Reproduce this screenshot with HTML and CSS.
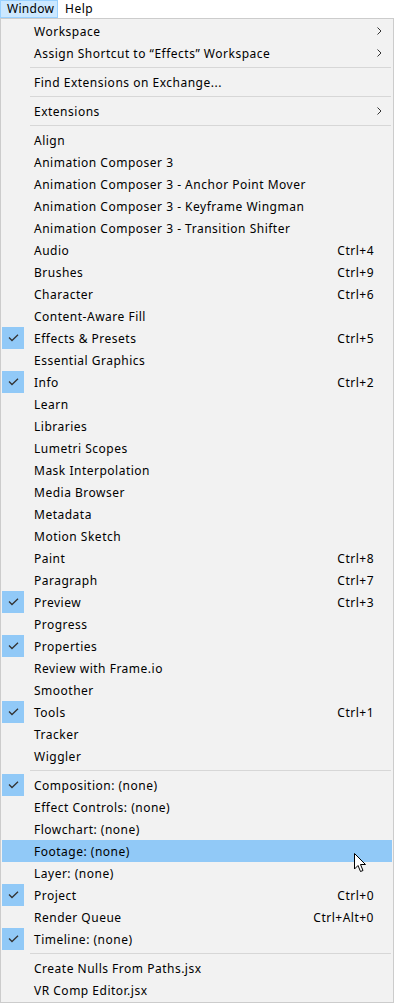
FILE: index.html
```html
<!DOCTYPE html>
<html>
<head>
<meta charset="utf-8">
<link rel="stylesheet" href="styles.css">
</head>
<body>
<div class="menubar">
  <div class="mb-item active">Window</div>
  <div class="mb-item">Help</div>
</div>
<div class="menu">
  <div class="row"><span class="label">Workspace</span><span class="sub"><svg width="5" height="8" viewBox="0 0 5 8"><path d="M0.5 0.5 L4 4 L0.5 7.5" fill="none" stroke="#333" stroke-width="1"/></svg></span></div>
  <div class="row"><span class="label">Assign Shortcut to “Effects” Workspace</span><span class="sub"><svg width="5" height="8" viewBox="0 0 5 8"><path d="M0.5 0.5 L4 4 L0.5 7.5" fill="none" stroke="#333" stroke-width="1"/></svg></span></div>
  <div class="sep"></div>
  <div class="row"><span class="label">Find Extensions on Exchange...</span></div>
  <div class="sep"></div>
  <div class="row"><span class="label">Extensions</span><span class="sub"><svg width="5" height="8" viewBox="0 0 5 8"><path d="M0.5 0.5 L4 4 L0.5 7.5" fill="none" stroke="#333" stroke-width="1"/></svg></span></div>
  <div class="sep"></div>
  <div class="row"><span class="label">Align</span></div>
  <div class="row"><span class="label">Animation Composer 3</span></div>
  <div class="row"><span class="label">Animation Composer 3 - Anchor Point Mover</span></div>
  <div class="row"><span class="label">Animation Composer 3 - Keyframe Wingman</span></div>
  <div class="row"><span class="label">Animation Composer 3 - Transition Shifter</span></div>
  <div class="row"><span class="label">Audio</span><span class="key">Ctrl+4</span></div>
  <div class="row"><span class="label">Brushes</span><span class="key">Ctrl+9</span></div>
  <div class="row"><span class="label">Character</span><span class="key">Ctrl+6</span></div>
  <div class="row"><span class="label">Content-Aware Fill</span></div>
  <div class="row checked"><span class="check"><svg width="11" height="8" viewBox="0 0 11 8"><path d="M1 3.5 L4 6.5 L10 0.8" fill="none" stroke="#333" stroke-width="1.3"/></svg></span><span class="label">Effects &amp; Presets</span><span class="key">Ctrl+5</span></div>
  <div class="row"><span class="label">Essential Graphics</span></div>
  <div class="row checked"><span class="check"><svg width="11" height="8" viewBox="0 0 11 8"><path d="M1 3.5 L4 6.5 L10 0.8" fill="none" stroke="#333" stroke-width="1.3"/></svg></span><span class="label">Info</span><span class="key">Ctrl+2</span></div>
  <div class="row"><span class="label">Learn</span></div>
  <div class="row"><span class="label">Libraries</span></div>
  <div class="row"><span class="label">Lumetri Scopes</span></div>
  <div class="row"><span class="label">Mask Interpolation</span></div>
  <div class="row"><span class="label">Media Browser</span></div>
  <div class="row"><span class="label">Metadata</span></div>
  <div class="row"><span class="label">Motion Sketch</span></div>
  <div class="row"><span class="label">Paint</span><span class="key">Ctrl+8</span></div>
  <div class="row"><span class="label">Paragraph</span><span class="key">Ctrl+7</span></div>
  <div class="row checked"><span class="check"><svg width="11" height="8" viewBox="0 0 11 8"><path d="M1 3.5 L4 6.5 L10 0.8" fill="none" stroke="#333" stroke-width="1.3"/></svg></span><span class="label">Preview</span><span class="key">Ctrl+3</span></div>
  <div class="row"><span class="label">Progress</span></div>
  <div class="row checked"><span class="check"><svg width="11" height="8" viewBox="0 0 11 8"><path d="M1 3.5 L4 6.5 L10 0.8" fill="none" stroke="#333" stroke-width="1.3"/></svg></span><span class="label">Properties</span></div>
  <div class="row"><span class="label">Review with Frame.io</span></div>
  <div class="row"><span class="label">Smoother</span></div>
  <div class="row checked"><span class="check"><svg width="11" height="8" viewBox="0 0 11 8"><path d="M1 3.5 L4 6.5 L10 0.8" fill="none" stroke="#333" stroke-width="1.3"/></svg></span><span class="label">Tools</span><span class="key">Ctrl+1</span></div>
  <div class="row"><span class="label">Tracker</span></div>
  <div class="row"><span class="label">Wiggler</span></div>
  <div class="sep"></div>
  <div class="row checked"><span class="check"><svg width="11" height="8" viewBox="0 0 11 8"><path d="M1 3.5 L4 6.5 L10 0.8" fill="none" stroke="#333" stroke-width="1.3"/></svg></span><span class="label">Composition: (none)</span></div>
  <div class="row"><span class="label">Effect Controls: (none)</span></div>
  <div class="row"><span class="label">Flowchart: (none)</span></div>
  <div class="row hover"><span class="label">Footage: (none)</span>
    <svg class="cursor" width="13" height="20" viewBox="0 0 13 20"><path d="M0.5 0.5 L0.5 16 L4 12.5 L6.5 18.5 L9 17.5 L6.5 11.5 L11.5 11.5 Z" fill="#fff" stroke="#000" stroke-width="1" stroke-linejoin="miter"/></svg>
  </div>
  <div class="row"><span class="label">Layer: (none)</span></div>
  <div class="row checked"><span class="check"><svg width="11" height="8" viewBox="0 0 11 8"><path d="M1 3.5 L4 6.5 L10 0.8" fill="none" stroke="#333" stroke-width="1.3"/></svg></span><span class="label">Project</span><span class="key">Ctrl+0</span></div>
  <div class="row"><span class="label">Render Queue</span><span class="key">Ctrl+Alt+0</span></div>
  <div class="row checked"><span class="check"><svg width="11" height="8" viewBox="0 0 11 8"><path d="M1 3.5 L4 6.5 L10 0.8" fill="none" stroke="#333" stroke-width="1.3"/></svg></span><span class="label">Timeline: (none)</span></div>
  <div class="sep"></div>
  <div class="row"><span class="label">Create Nulls From Paths.jsx</span></div>
  <div class="row"><span class="label">VR Comp Editor.jsx</span></div>
</div>
</body>
</html>
```
FILE: styles.css
```css
html, body {
  margin: 0;
  padding: 0;
  background: #ffffff;
}
body {
  width: 394px;
  height: 1003px;
  overflow: hidden;
  font-family: "Noto Sans", "Liberation Sans", sans-serif;
  font-size: 12px;
  letter-spacing: 0.5px;
  color: #000;
}
.menubar {
  display: flex;
  height: 18px;
  background: #fff;
}
.mb-item {
  box-sizing: border-box;
  height: 18px;
  line-height: 16px;
  padding: 0 6px;
  border: 1px solid transparent;
}
.mb-item.active {
  background: #cce8ff;
  border-color: #99d1ff;
  width: 58px;
  letter-spacing: 0.3px;
}
.menu {
  box-sizing: border-box;
  width: 394px;
  height: 985px;
  background: #f2f2f2;
  border: 1px solid #cccccc;
  padding: 1px 1px 0 1px;
}
.row {
  position: relative;
  display: flex;
  align-items: center;
  height: 22px;
  padding-left: 32px;
  padding-right: 18px;
}
.row.hover {
  background: #91c9f7;
}
.label {
  flex: 1;
  white-space: nowrap;
}
.key {
  white-space: nowrap;
}
.sub {
  display: flex;
  margin-right: -8px;
}
.check {
  position: absolute;
  left: 0;
  top: 0;
  width: 22px;
  height: 22px;
  background: #91c9f7;
  display: flex;
  align-items: center;
  justify-content: center;
}
.sep {
  height: 7px;
  margin-left: 28px;
  margin-right: 1px;
  box-sizing: border-box;
  padding-top: 3px;
}
.sep::after {
  content: "";
  display: block;
  height: 1px;
  background: #d7d7d7;
}
.cursor {
  position: absolute;
  left: 352px;
  top: 13px;
}
```
